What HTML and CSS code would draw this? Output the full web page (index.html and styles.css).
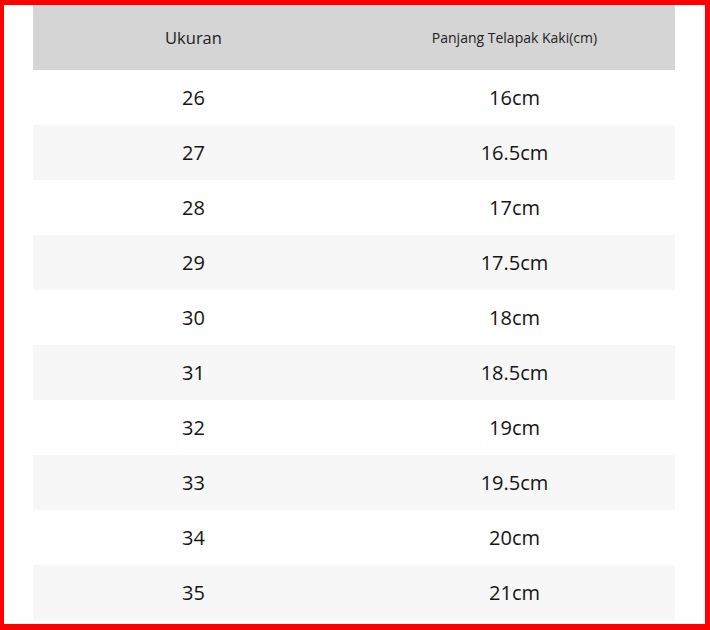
FILE: index.html
```html
<!DOCTYPE html>
<html>
<head>
<meta charset="utf-8">
<link rel="stylesheet" href="styles.css">
</head>
<body>
<div class="frame">
  <table class="size-table">
    <thead>
      <tr><th class="h1">Ukuran</th><th class="h2">Panjang Telapak Kaki(cm)</th></tr>
    </thead>
    <tbody>
      <tr><td>26</td><td>16cm</td></tr>
      <tr><td>27</td><td>16.5cm</td></tr>
      <tr><td>28</td><td>17cm</td></tr>
      <tr><td>29</td><td>17.5cm</td></tr>
      <tr><td>30</td><td>18cm</td></tr>
      <tr><td>31</td><td>18.5cm</td></tr>
      <tr><td>32</td><td>19cm</td></tr>
      <tr><td>33</td><td>19.5cm</td></tr>
      <tr><td>34</td><td>20cm</td></tr>
      <tr><td>35</td><td>21cm</td></tr>
    </tbody>
  </table>
</div>
</body>
</html>
```
FILE: styles.css
```css
html, body { margin: 0; padding: 0; }
body { width: 710px; height: 630px; overflow: hidden; background: #fff; }
.frame {
  box-sizing: border-box;
  width: 710px;
  height: 630px;
  border-style: solid;
  border-color: #f00;
  border-width: 5px 5px 6px 4px;
  padding: 0 30px 0 29px;
  background: #fff;
  font-family: "Open Sans", "Noto Sans", sans-serif;
  color: #151515;
}
.size-table {
  width: 642px;
  border-collapse: collapse;
  table-layout: fixed;
}
.size-table th {
  background: #d5d5d5;
  height: 65px;
  padding: 0;
  font-weight: 400;
  text-align: center;
  color: #222;
}
.h1 { font-size: 16.5px; }
.h2 { font-size: 14px; }
.size-table td {
  height: 55px;
  padding: 0;
  text-align: center;
  font-size: 20px;
}
.size-table tbody tr:nth-child(even) td { background: #f7f7f7; }
```
